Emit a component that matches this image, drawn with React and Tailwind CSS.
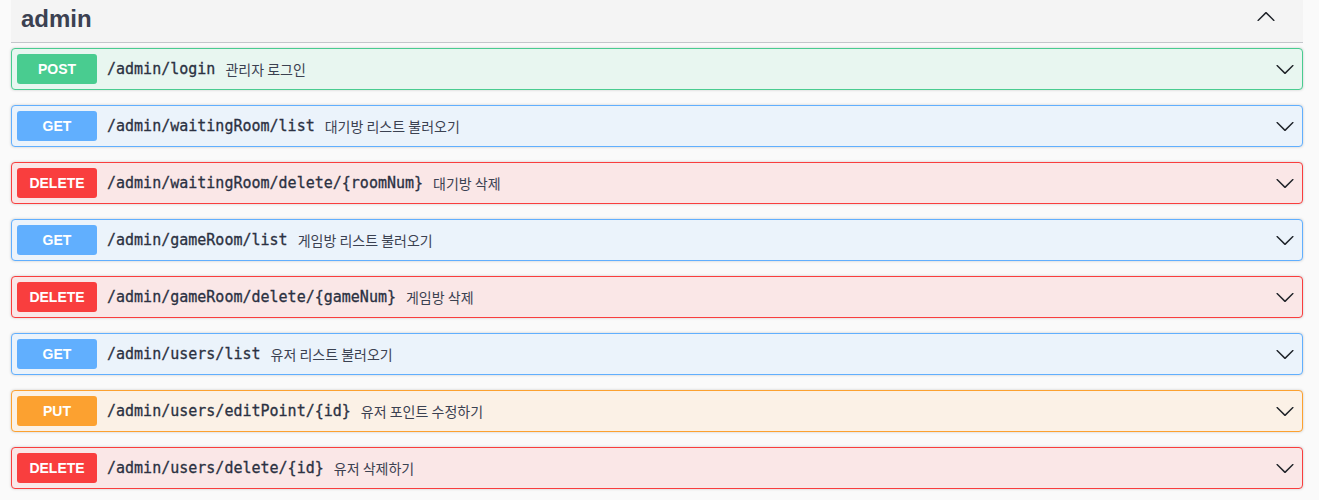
const ops = [
  { method: "POST", path: "/admin/login", desc: "관리자 로그인" },
  { method: "GET", path: "/admin/waitingRoom/list", desc: "대기방 리스트 불러오기" },
  { method: "DELETE", path: "/admin/waitingRoom/delete/{roomNum}", desc: "대기방 삭제" },
  { method: "GET", path: "/admin/gameRoom/list", desc: "게임방 리스트 불러오기" },
  { method: "DELETE", path: "/admin/gameRoom/delete/{gameNum}", desc: "게임방 삭제" },
  { method: "GET", path: "/admin/users/list", desc: "유저 리스트 불러오기" },
  { method: "PUT", path: "/admin/users/editPoint/{id}", desc: "유저 포인트 수정하기" },
  { method: "DELETE", path: "/admin/users/delete/{id}", desc: "유저 삭제하기" },
];

const styles = {
  POST: { box: "border-[#49cc90] bg-[#e8f6f0]", badge: "bg-[#49cc90]" },
  GET: { box: "border-[#61affe] bg-[#ebf3fb]", badge: "bg-[#61affe]" },
  DELETE: { box: "border-[#f93e3e] bg-[#fae7e7]", badge: "bg-[#f93e3e]" },
  PUT: { box: "border-[#fca130] bg-[#fbf1e6]", badge: "bg-[#fca130]" },
};

function Arrow({ up }) {
  return (
    <svg
      width="20"
      height="20"
      viewBox="0 0 20 20"
      className={up ? "rotate-180" : ""}
      fill="#1f2329"
    >
      <path d="M17.418 6.109c.272-.268.709-.268.979 0s.271.701 0 .969l-7.908 7.83c-.27.268-.707.268-.979 0l-7.908-7.83c-.27-.268-.27-.701 0-.969.271-.268.709-.268.979 0L10 13.25l7.418-7.141z" />
    </svg>
  );
}

function Operation({ method, path, desc }) {
  const s = styles[method];
  return (
    <div
      className={`mb-[15px] flex h-[42px] items-center rounded-[4px] border p-[5px] shadow-[0_0_3px_rgba(0,0,0,0.19)] ${s.box}`}
    >
      <div
        className={`flex h-[30px] w-[80px] shrink-0 items-center justify-center rounded-[3px] text-[14px] font-bold text-white font-['Liberation_Sans',sans-serif] ${s.badge}`}
      >
        {method}
      </div>
      <span className="ml-[10px] text-[15px] text-[#2b3142] font-['DejaVu_Sans_Mono',monospace] [-webkit-text-stroke:0.3px_#2b3142]">
        {path}
      </span>
      <span className="ml-[10px] text-[14px] text-[#3b4151] font-['Noto_Sans_CJK_KR',sans-serif]">
        {desc}
      </span>
      <div className="ml-auto mr-[2px] flex items-center">
        <Arrow />
      </div>
    </div>
  );
}

export default function App() {
  return (
    <div className="min-h-[500px] bg-[#fafafa] pl-[11px] pr-[16px] font-['Liberation_Sans',sans-serif]">
      <div className="flex h-[43px] items-center border-b border-[#c4c6cb] bg-[#f4f4f4] pl-[10px] pr-[27px]">
        <h3 className="text-[24px] font-bold text-[#3b4151] -mt-[5px]">admin</h3>
        <div className="ml-auto -mt-[8px] flex items-center">
          <Arrow up />
        </div>
      </div>
      <div className="pt-[5px]">
        {ops.map((op) => (
          <Operation key={op.path} {...op} />
        ))}
      </div>
    </div>
  );
}
